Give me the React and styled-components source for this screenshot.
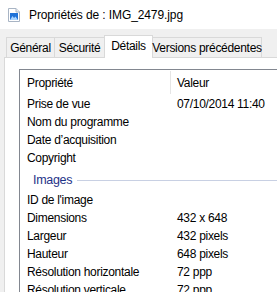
import React from "react";
import styled, { createGlobalStyle } from "styled-components";

// Global
const GlobalStyle = createGlobalStyle`
    html, body {
        margin: 0;
        padding: 0;
        background: #f0f0f0;
        font-family: "Liberation Sans", Arial, sans-serif;
        font-size: 12px;
        color: #000;
        overflow: hidden;
    }
`;

// Styled Components
const Styled_Window = styled.div`
    width: 277px;
    height: 292px;
    display: flex;
    flex-direction: column;
    background: #f0f0f0;
`;

const Styled_TitleBar = styled.div`
    display: flex;
    align-items: center;
    gap: 9px;
    height: 29px;
    padding-left: 8px;
    background: #fff;
    font-size: 12px;
    letter-spacing: -0.1px;
    white-space: nowrap;
`;

const Styled_TabStrip = styled.div`
    display: flex;
    align-items: flex-end;
    height: 22px;
    margin-top: 6px;
    padding-left: 6px;
    position: relative;
    z-index: 1;
`;

const Styled_Tab = styled.div`
    display: flex;
    align-items: ${p => (p.$active ? "flex-start" : "center")};
    justify-content: center;
    box-sizing: border-box;
    width: ${p => p.$width}px;
    height: ${p => (p.$active ? 23 : 20)}px;
    margin-left: -1px;
    margin-bottom: ${p => (p.$active ? -1 : 0)}px;
    padding-top: ${p => (p.$active ? 3 : 0)}px;
    border: 1px solid #d9d9d9;
    border-bottom: none;
    background: ${p => (p.$active ? "#fff" : "#f0f0f0")};
    letter-spacing: -0.3px;
    white-space: nowrap;

    &:first-child {
        margin-left: 0;
    }
`;

const Styled_Panel = styled.div`
    flex: 1;
    margin-left: 4px;
    padding: 11px 0 0 14px;
    background: #fff;
    border-left: 1px solid #d9d9d9;
    border-top: 1px solid #d9d9d9;
    overflow: hidden;
`;

const Styled_List = styled.div`
    height: 100%;
    border-left: 1px solid #828790;
    border-top: 1px solid #828790;
    letter-spacing: -0.3px;
`;

const Styled_HeaderRow = styled.div`
    display: flex;
    height: 25px;
    align-items: stretch;
`;

const Styled_HeaderCell = styled.div`
    display: flex;
    align-items: center;
    width: ${p => (p.$first ? "143px" : "auto")};
    padding-left: ${p => (p.$first ? 7 : 6)}px;
    border-right: ${p => (p.$first ? "1px solid #e5e5e5" : "none")};
    margin: 1px 0 1px 0;
`;

const Styled_Row = styled.div`
    display: flex;
    align-items: center;
    height: 18px;
    white-space: nowrap;
`;

const Styled_Name = styled.div`
    width: 150px;
    padding-left: 7px;
    box-sizing: border-box;
`;

const Styled_Value = styled.div`
    padding-left: 7px;
`;

const Styled_Group = styled.div`
    display: flex;
    align-items: center;
    gap: 5px;
    height: 24px;
    padding-left: 13px;
    padding-top: 2px;
    box-sizing: border-box;
    color: #1e3287;
    font-size: 12.5px;

    &::after {
        content: "";
        flex: 1;
        height: 1px;
        background: #c8d0e3;
    }
`;

const FileIcon = () => (
    <svg width="12" height="14" viewBox="0 0 12 14">
        <path d="M0.5 0.5 H8 L11.5 4 V13.5 H0.5 Z" fill="#fff" stroke="#a8b4c4" />
        <path d="M8 0.5 V4 H11.5" fill="#e8edf3" stroke="#a8b4c4" />
        <rect x="2" y="5" width="8" height="7" fill="#1f72d8" />
        <path d="M2 12 L4.5 8 L6 10 L7.5 8.5 L10 12 Z" fill="#a9d4ff" />
    </svg>
);

const tabs = [
    { label: "Général", width: 49 },
    { label: "Sécurité", width: 51 },
    { label: "Détails", width: 49, active: true },
    { label: "Versions précédentes", width: 110 },
];

const rowsTop = [
    ["Prise de vue", "07/10/2014 11:40"],
    ["Nom du programme", ""],
    ["Date d\u2019acquisition", ""],
    ["Copyright", ""],
];

const rowsImage = [
    ["ID de l'image", ""],
    ["Dimensions", "432 x 648"],
    ["Largeur", "432 pixels"],
    ["Hauteur", "648 pixels"],
    ["Résolution horizontale", "72 ppp"],
    ["Résolution verticale", "72 ppp"],
];

export default function App() {
    return (
        <>
            <GlobalStyle />
            <Styled_Window>
                <Styled_TitleBar>
                    <FileIcon />
                    <span>Propriétés de : IMG_2479.jpg</span>
                </Styled_TitleBar>

                <Styled_TabStrip>
                    {tabs.map(t => (
                        <Styled_Tab key={t.label} $width={t.width} $active={t.active}>
                            {t.label}
                        </Styled_Tab>
                    ))}
                </Styled_TabStrip>

                <Styled_Panel>
                    <Styled_List>
                        <Styled_HeaderRow>
                            <Styled_HeaderCell $first>Propriété</Styled_HeaderCell>
                            <Styled_HeaderCell>Valeur</Styled_HeaderCell>
                        </Styled_HeaderRow>
                        {rowsTop.map(([n, v]) => (
                            <Styled_Row key={n}>
                                <Styled_Name>{n}</Styled_Name>
                                <Styled_Value>{v}</Styled_Value>
                            </Styled_Row>
                        ))}
                        <Styled_Group>Images</Styled_Group>
                        {rowsImage.map(([n, v]) => (
                            <Styled_Row key={n}>
                                <Styled_Name>{n}</Styled_Name>
                                <Styled_Value>{v}</Styled_Value>
                            </Styled_Row>
                        ))}
                    </Styled_List>
                </Styled_Panel>
            </Styled_Window>
        </>
    );
}
